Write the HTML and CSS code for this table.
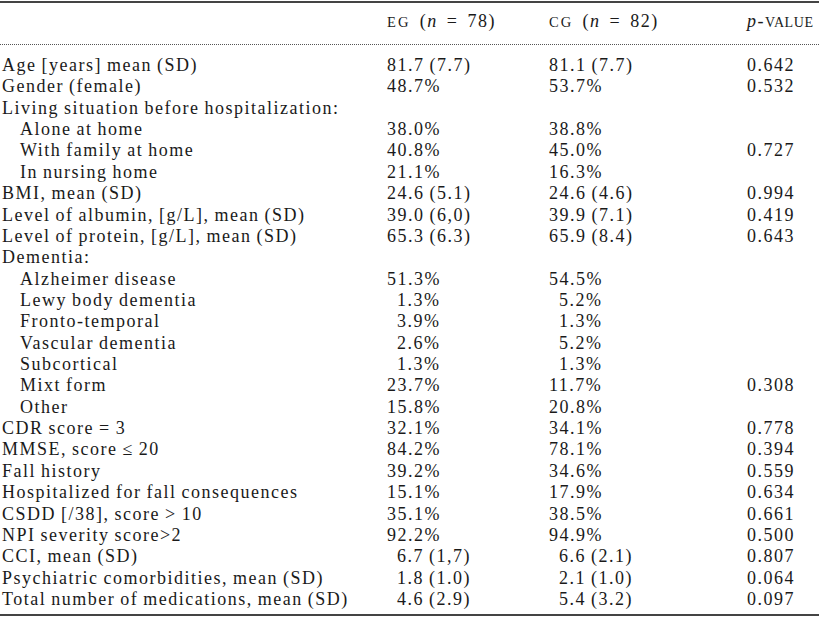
FILE: index.html
```
<!DOCTYPE html>
<html>
<head>
<meta charset="utf-8">
<link rel="stylesheet" href="styles.css">
</head>
<body>
<div class="table">
  <div class="head row">
    <div class="c1"></div>
    <div class="c2"><span class="sc">EG</span> (<i>n</i> = 78)</div>
    <div class="c3"><span class="sc">CG</span> (<i>n</i> = 82)</div>
    <div class="c4"><i>p</i>-<span class="sc tight">VALUE</span></div>
  </div>
  <div class="body">
    <div class="row"><div class="c1">Age [years] mean (SD)</div><div class="c2">81.7 (7.7)</div><div class="c3">81.1 (7.7)</div><div class="c4">0.642</div></div>
    <div class="row"><div class="c1">Gender (female)</div><div class="c2">48.7%</div><div class="c3">53.7%</div><div class="c4">0.532</div></div>
    <div class="row"><div class="c1">Living situation before hospitalization:</div><div class="c2"></div><div class="c3"></div><div class="c4"></div></div>
    <div class="row"><div class="c1 ind">Alone at home</div><div class="c2">38.0%</div><div class="c3">38.8%</div><div class="c4"></div></div>
    <div class="row"><div class="c1 ind">With family at home</div><div class="c2">40.8%</div><div class="c3">45.0%</div><div class="c4">0.727</div></div>
    <div class="row"><div class="c1 ind">In nursing home</div><div class="c2">21.1%</div><div class="c3">16.3%</div><div class="c4"></div></div>
    <div class="row"><div class="c1">BMI, mean (SD)</div><div class="c2">24.6 (5.1)</div><div class="c3">24.6 (4.6)</div><div class="c4">0.994</div></div>
    <div class="row"><div class="c1">Level of albumin, [g/L], mean (SD)</div><div class="c2">39.0 (6,0)</div><div class="c3">39.9 (7.1)</div><div class="c4">0.419</div></div>
    <div class="row"><div class="c1">Level of protein, [g/L], mean (SD)</div><div class="c2">65.3 (6.3)</div><div class="c3">65.9 (8.4)</div><div class="c4">0.643</div></div>
    <div class="row"><div class="c1">Dementia:</div><div class="c2"></div><div class="c3"></div><div class="c4"></div></div>
    <div class="row"><div class="c1 ind">Alzheimer disease</div><div class="c2">51.3%</div><div class="c3">54.5%</div><div class="c4"></div></div>
    <div class="row"><div class="c1 ind">Lewy body dementia</div><div class="c2 d1">1.3%</div><div class="c3 d1">5.2%</div><div class="c4"></div></div>
    <div class="row"><div class="c1 ind">Fronto-temporal</div><div class="c2 d1">3.9%</div><div class="c3 d1">1.3%</div><div class="c4"></div></div>
    <div class="row"><div class="c1 ind">Vascular dementia</div><div class="c2 d1">2.6%</div><div class="c3 d1">5.2%</div><div class="c4"></div></div>
    <div class="row"><div class="c1 ind">Subcortical</div><div class="c2 d1">1.3%</div><div class="c3 d1">1.3%</div><div class="c4"></div></div>
    <div class="row"><div class="c1 ind">Mixt form</div><div class="c2">23.7%</div><div class="c3">11.7%</div><div class="c4">0.308</div></div>
    <div class="row"><div class="c1 ind">Other</div><div class="c2">15.8%</div><div class="c3">20.8%</div><div class="c4"></div></div>
    <div class="row"><div class="c1">CDR score = 3</div><div class="c2">32.1%</div><div class="c3">34.1%</div><div class="c4">0.778</div></div>
    <div class="row"><div class="c1">MMSE, score ≤ 20</div><div class="c2">84.2%</div><div class="c3">78.1%</div><div class="c4">0.394</div></div>
    <div class="row"><div class="c1">Fall history</div><div class="c2">39.2%</div><div class="c3">34.6%</div><div class="c4">0.559</div></div>
    <div class="row"><div class="c1">Hospitalized for fall consequences</div><div class="c2">15.1%</div><div class="c3">17.9%</div><div class="c4">0.634</div></div>
    <div class="row"><div class="c1">CSDD [/38], score &gt; 10</div><div class="c2">35.1%</div><div class="c3">38.5%</div><div class="c4">0.661</div></div>
    <div class="row"><div class="c1">NPI severity score&gt;2</div><div class="c2">92.2%</div><div class="c3">94.9%</div><div class="c4">0.500</div></div>
    <div class="row"><div class="c1">CCI, mean (SD)</div><div class="c2 d1">6.7 (1,7)</div><div class="c3 d1">6.6 (2.1)</div><div class="c4">0.807</div></div>
    <div class="row"><div class="c1">Psychiatric comorbidities, mean (SD)</div><div class="c2 d1">1.8 (1.0)</div><div class="c3 d1">2.1 (1.0)</div><div class="c4">0.064</div></div>
    <div class="row"><div class="c1">Total number of medications, mean (SD)</div><div class="c2 d1">4.6 (2.9)</div><div class="c3 d1">5.4 (3.2)</div><div class="c4">0.097</div></div>
  </div>
</div>
</body>
</html>
```
FILE: styles.css
```
html, body {
  margin: 0;
  padding: 0;
  background: #fff;
}
body {
  font-family: "Liberation Serif", "Times New Roman", serif;
  font-size: 18px;
  letter-spacing: 1.5px;
  word-spacing: -1px;
  color: #1a1a1a;
}
.table {
  width: 819px;
  padding-top: 1px;
}
.row {
  display: grid;
  grid-template-columns: 385px 162px 198px 1fr;
  padding-left: 2px;
  height: 21.36px;
  line-height: 21.36px;
  white-space: nowrap;
}
.head {
  border-top: 2px solid #444;
  height: 44px;
  line-height: 36px;
  border-bottom: 1px dotted #555;
  box-sizing: border-box;
  word-spacing: 3px;
}
.sc {
  font-size: 14.5px;
  letter-spacing: 2.2px;
}
.sc.tight {
  font-size: 14px;
  letter-spacing: 0.6px;
}
.body {
  padding-top: 10px;
  padding-bottom: 4px;
  border-bottom: 2px solid #444;
}
.ind {
  padding-left: 18px;
}
.d1 {
  padding-left: 10px;
}
```
